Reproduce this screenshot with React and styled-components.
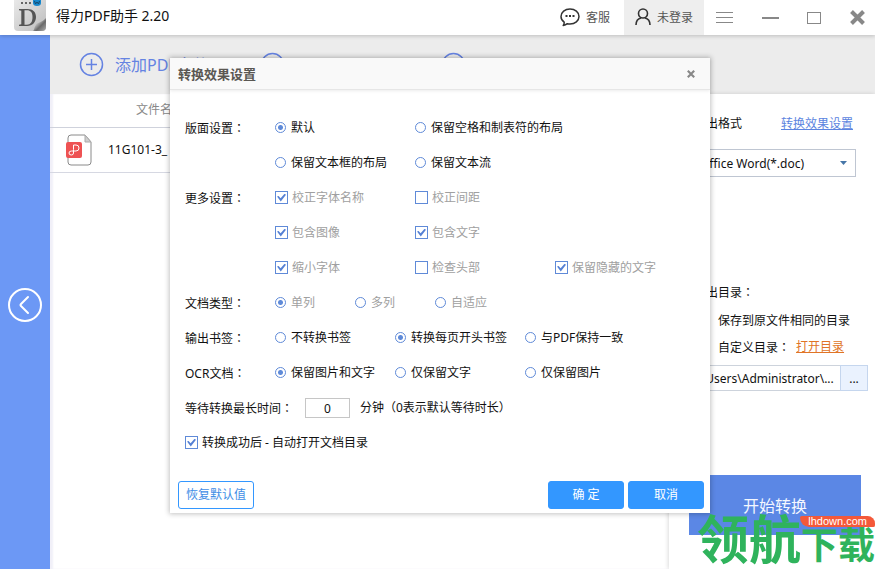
import React from "react";
import styled, { createGlobalStyle, css } from "styled-components";

const GlobalStyle = createGlobalStyle`
  * { box-sizing: border-box; }
  body { margin: 0; }
  body, button, input, select {
    font-family: "Noto Sans", "Noto Sans CJK SC", sans-serif;
    font-size: 12px;
    color: #111;
  }
  button { border: 0; padding: 0; background: none; cursor: pointer; }
`;

const Page = styled.div`
  position: relative;
  display: flex;
  flex-direction: column;
  min-height: 100vh;
  overflow: hidden;
  background: #fff;
  line-height: 18px;
`;

/* Title bar */
const TitleBar = styled.header`
  position: relative;
  display: flex;
  align-items: stretch;
  height: 35px;
  padding: 0 10px 0 14px;
  background: #fff;
  box-shadow: 0 1px 4px rgba(0, 0, 0, 0.2);
`;
const AppTitle = styled.h1`
  flex: 1;
  margin: 0;
  padding: 6px 0 0 10px;
  font-size: 14px;
  font-weight: 400;
  line-height: 20px;
`;
const TitleButton = styled.button`
  display: flex;
  align-items: center;
  gap: 6px;
  padding: 0 ${(p) => p.$pad}px 2px;
  color: #555;
  background: ${(p) => (p.$filled ? "#eeeeee" : "transparent")};
`;
const WindowButtons = styled.div`
  display: flex;
  align-items: center;
  justify-content: space-between;
  width: 149px;
  margin-left: 12px;
`;
const IconButton = styled.button`
  display: flex;
`;

const Columns = styled.div`
  display: flex;
  flex: 1;
`;
const Rail = styled.nav`
  display: flex;
  flex: 0 0 50px;
  align-items: center;
  justify-content: center;
  padding-top: 5px;
  background: #6c98f5;
`;
const Workspace = styled.div`
  display: flex;
  flex: 1;
  flex-direction: column;
  min-width: 0;
`;
const Toolbar = styled.div`
  display: grid;
  grid-template-columns: 181px 181px 1fr;
  align-items: center;
  height: 59px;
  padding-left: 29px;
  background: #ececec;
`;
const ToolButton = styled.button`
  display: flex;
  align-items: center;
  gap: 11px;
  font-size: 16px;
  line-height: 24px;
  white-space: nowrap;
  color: #6583e2;
`;
const Content = styled.div`
  display: flex;
  flex: 1;
  box-shadow: inset 3px 0 2px #f1f0f8;
`;

/* File list */
const ListPane = styled.main`
  flex: 1;
  min-width: 0;
`;
const FileTable = styled.table`
  width: 100%;
  border-collapse: collapse;
`;
const HeadCell = styled.th`
  height: 33px;
  padding: 0 0 0 86px;
  border-bottom: 1px solid #cfd2dc;
  font-weight: 400;
  text-align: left;
  color: #888;
`;
const FileCell = styled.td`
  height: 45px;
  padding: 0 0 0 16px;
  border-bottom: 1px solid #d6d8e2;
`;
const FileName = styled.span`
  display: flex;
  align-items: center;
  gap: 16px;
`;

/* Output panel */
const Panel = styled.aside`
  display: flex;
  flex: 0 0 206px;
  flex-direction: column;
  min-width: 0;
  padding: 21px 7px 34px 20px;
  background: #fff;
  box-shadow: -1px 0 4px rgba(0, 0, 0, 0.14);
`;
const PanelHead = styled.div`
  display: flex;
  justify-content: space-between;
  padding: 0 15px 0 5px;
`;
const Link = styled.a`
  color: ${(p) => (p.$warm ? "#e07426" : "#5b84e0")};
  text-decoration: underline;
`;
const SelectBox = styled.span`
  display: flex;
  align-items: center;
  height: 28px;
  margin: 16px 12px 0 0;
  padding-right: 8px;
  border: 1px solid #bfc6d2;
`;
const Select = styled.select`
  flex: 1;
  min-width: 0;
  height: 26px;
  padding: 0 0 0 10px;
  border: 0;
  appearance: none;
  background: transparent;
`;
const OutputDir = styled.fieldset`
  min-width: 0;
  margin: 106px 0 0;
  padding: 0;
  border: 0;
`;
const Legend = styled.legend`
  padding: 0 0 0 5px;
`;
const DirRow = styled.div`
  display: flex;
  align-items: center;
  gap: 6px;
  height: 26px;
  padding-left: 7px;
`;
const DirRows = styled.div`
  padding-top: 6px;
`;
const PathRow = styled.div`
  display: flex;
  height: 26px;
  margin-top: 5px;
`;
const PathInput = styled.input`
  flex: 1;
  width: 0;
  min-width: 0;
  padding: 0;
  border: 1px solid #cdd3dc;
  border-right: 0;
`;
const BrowseButton = styled.button`
  width: 28px;
  border: 1px solid #c5d6ee;
  background: #eaf2fe;
`;
const StartButton = styled.button`
  height: 60px;
  margin: auto 7px 0 0;
  font-size: 16px;
  color: #f4f7ff;
  background: #5b87e5;
`;

/* Settings dialog */
const Overlay = styled.div`
  position: absolute;
  inset: 0;
  display: flex;
  align-items: center;
  justify-content: center;
  padding: 2px 0 0 5px;
`;
const Dialog = styled.section`
  width: 540px;
  background: #fff;
  box-shadow: 0 0 5px 1px rgba(0, 0, 0, 0.24);
`;
const DialogHead = styled.header`
  display: flex;
  align-items: center;
  justify-content: space-between;
  height: 32px;
  padding: 0 15px 0 8px;
  border-bottom: 1px solid #e6e6e6;
  background: #f9f9f9;
  box-shadow: 0 1px 3px rgba(0, 0, 0, 0.08);
`;
const DialogTitle = styled.h2`
  margin: 0;
  font-size: 13px;
  font-weight: 600;
  color: #5a5752;
`;
const Form = styled.form`
  padding: 20px 6px 4px 15px;
`;
const Group = styled.div`
  display: flex;
`;
const GroupLabel = styled.div`
  flex: 0 0 90px;
  height: 35px;
  line-height: 35px;
`;
const ColonMark = styled.span`
  font-family: "Noto Sans CJK TC", sans-serif;
`;
const Options = styled.div`
  display: grid;
  grid-template-columns: ${(p) => p.$cols};
  grid-auto-rows: 35px;
`;
const Option = styled.label`
  display: flex;
  align-items: center;
  grid-column-start: ${(p) => (p.$first ? 1 : "auto")};
  gap: ${(p) => (p.$wide ? 10 : 4)}px;
  white-space: nowrap;
  color: ${(p) => (p.$dim ? "#a0a0a0" : "#111")};
`;
const controlBase = css`
  flex: none;
  margin: 0;
  appearance: none;
  border: 1px solid #5f8ad8;
  background: #fff;
`;
const Radio = styled.input.attrs({ type: "radio" })`
  ${controlBase}
  width: 11px;
  height: 11px;
  margin-right: 1px;
  border-radius: 50%;
  &:checked {
    background: radial-gradient(circle, #5f8ad8 0 2px, #fff 3px);
  }
`;
const Tick = styled.input.attrs({ type: "checkbox" })`
  ${controlBase}
  width: 13px;
  height: 13px;
  display: grid;
  place-items: center;
  &:checked::before {
    content: "";
    width: 9px;
    height: 8px;
    background: #5580d4;
    clip-path: polygon(0 38%, 18% 30%, 40% 58%, 84% 4%, 100% 16%, 42% 100%);
  }
`;
const WaitRow = styled.div`
  display: flex;
  align-items: center;
  height: 36px;
`;
const WaitLabel = styled.label`
  flex: 0 0 120px;
`;
const MinuteInput = styled.input`
  width: 45px;
  height: 20px;
  margin-right: 10px;
  padding: 0;
  border: 1px solid #c6c6c6;
  text-align: center;
`;
const OpenRow = styled.div`
  display: flex;
  height: 33px;
`;
const Actions = styled.div`
  display: flex;
  gap: 4px;
  margin: 22px 0 0 -7px;
`;
const Action = styled.button`
  width: 76px;
  height: 28px;
  padding-bottom: 2px;
  border: 1px solid #3397ff;
  border-radius: 3px;
  margin-right: ${(p) => (p.$ghost ? "auto" : "0")};
  color: ${(p) => (p.$ghost ? "#3f8ee6" : "#fff")};
  background: ${(p) => (p.$ghost ? "#fff" : "#3397ff")};
`;

/* Site mark in the lower right corner */
const SiteMark = styled.div`
  position: absolute;
  right: 0;
  bottom: 0;
  display: flex;
  align-items: flex-end;
  font-weight: 700;
  color: #2fb35c;
`;
const MarkBig = styled.span`
  font-size: 52px;
  line-height: 60px;
`;
const MarkSmall = styled.span`
  font-size: 37px;
  line-height: 48px;
`;
const MarkTag = styled.span`
  position: absolute;
  top: 7px;
  right: 0;
  padding: 0 8px;
  border-radius: 2px 8px 2px 10px;
  font: 400 11px/11px "Liberation Sans", sans-serif;
  color: #fff;
  background: #f4593a;
`;

const LogoIcon = () => (
  <svg width="32" height="35" viewBox="0 0 32 35" aria-hidden="true">
    <defs>
      <linearGradient id="logo-bg" x1="0" y1="0" x2="1" y2="1">
        <stop offset="0" stopColor="#e9e9e9" />
        <stop offset="1" stopColor="#bdbdbd" />
      </linearGradient>
      <linearGradient id="logo-curl" x1="0" y1="0" x2="1" y2="1">
        <stop offset="0.2" stopColor="#f4f4f4" />
        <stop offset="0.6" stopColor="#6a6a6a" />
        <stop offset="1" stopColor="#b0b0b0" />
      </linearGradient>
    </defs>
    <path d="M0 0H32V27Q32 31 28 31H4Q0 31 0 27Z" fill="url(#logo-bg)" />
    <path d="M5 9h8.500c5.500 0 8.500 3 8.500 8s-3.500 9-9 9H5v-1.200l2.300-.5V10.700L5 10.200Zm5.500 1.300v14.400h2.500c3.500 0 5.500-2.700 5.500-7.700 0-4.500-2-6.700-5.500-6.700Z" fill="#555" fillRule="evenodd" />
    <path d="M19 31c2-2 1-6 5-8 3-1 5-2 8-5v9q0 4-4 4Z" fill="url(#logo-curl)" />
    <path d="M7 2h2v2H7zM11 2h2v2h-2zM15 2h2v2h-2z" fill="#666" />
    <path d="M19 0h8v3q0 3-4 3t-4-3Z" fill="#1687cc" />
    <path d="m20.500 1 1 3 1.500-2 1.500 2 1-3" fill="none" stroke="#16496b" />
  </svg>
);
const ChatIcon = () => (
  <svg width="20" height="20" viewBox="0 0 20 20" fill="none" stroke="#333" strokeWidth="1.500" aria-hidden="true">
    <path d="M4.200 15.200C2 13.800 1 11.500 1 9.500 1 5.200 5 2 10 2s9 3.200 9 7.500-4 7.500-9 7.500c-1 0-1.800-.1-2.600-.3-1.200 1-2.400 1.600-4.200 1.800.8-.9 1.100-2 1-3.300Z" strokeLinejoin="round" />
    <path d="M5.500 9h2M9 9h2M12.500 9h2" strokeWidth="2" />
  </svg>
);
const UserIcon = () => (
  <svg width="16" height="18" viewBox="0 0 16 18" fill="none" stroke="#333" strokeWidth="1.600" aria-hidden="true">
    <circle cx="8" cy="5.500" r="4.500" />
    <path d="M1 17c0-3.500 2-6.300 5-7M15 17c0-3.500-2-6.300-5-7" />
  </svg>
);
const MenuIcon = () => (
  <svg width="17" height="12" viewBox="0 0 17 12" stroke="#888" aria-hidden="true">
    <path d="M0 .5h17M0 5.500h17M0 10.500h17" />
  </svg>
);
const MinimizeIcon = () => (
  <svg width="17" height="12" viewBox="0 0 17 12" stroke="#888" strokeWidth="2" aria-hidden="true">
    <path d="M0 6h17" />
  </svg>
);
const MaximizeIcon = () => (
  <svg width="14" height="12" viewBox="0 0 14 12" fill="none" stroke="#888" aria-hidden="true">
    <rect x=".5" y=".5" width="13" height="11" />
  </svg>
);
const CrossIcon = ({ size, width }) => (
  <svg width={size} height={size} viewBox="0 0 15 15" stroke="#888" strokeWidth={width} aria-hidden="true">
    <path d="M1.500 1.500l12 12M13.500 1.500l-12 12" />
  </svg>
);
const CircleIcon = ({ plus }) => (
  <svg width="25" height="25" viewBox="0 0 25 25" fill="none" stroke="#6583e2" strokeWidth="1.500" aria-hidden="true">
    <circle cx="12.500" cy="12.500" r="11" />
    {plus && <path d="M12.500 7v11M7 12.500h11" />}
  </svg>
);
const BackIcon = () => (
  <svg width="34" height="34" viewBox="0 0 34 34" fill="none" stroke="#fff" strokeWidth="2" aria-hidden="true">
    <circle cx="17" cy="17" r="16" />
    <path d="M20 9l-7 7q-1 1 0 2L20 25" strokeLinecap="round" />
  </svg>
);
const PdfIcon = () => (
  <svg width="26" height="32" viewBox="0 0 26 32" fill="none" aria-hidden="true">
    <path d="M5 1h14l6 7v20q0 3-3 3H5q-3 0-3-3V4q0-3 3-3Z" fill="#fff" stroke="#8a8a8a" />
    <path d="M19 1v7h6Z" fill="#cfcfcf" stroke="#aaa" />
    <rect y="8" width="16" height="16" rx="2" fill="#ee5253" />
    <path d="M7.500 15.500V11h2.500q3 0 3 3t-3 3H5.500Q3 17 3 19t2.300 2q2.200 0 2.200-2v-3.500" stroke="#fff" />
  </svg>
);
const ArrowIcon = () => (
  <svg width="7" height="4" viewBox="0 0 7 4" fill="#4676a8" aria-hidden="true">
    <path d="M0 0h7L3.500 4Z" />
  </svg>
);

const groups = [
  { id: "layout", label: "版面设置", cols: "140px 140px", radio: true, items: [["默认", 1], ["保留空格和制表符的布局"], ["保留文本框的布局"], ["保留文本流"]] },
  { id: "more", label: "更多设置", cols: "140px 140px 110px", dim: true, items: [["校正字体名称", 1], ["校正间距"], ["包含图像", 1, true], ["包含文字", 1], ["缩小字体", 1, true], ["检查头部"], ["保留隐藏的文字", 1]] },
  { id: "type", label: "文档类型", cols: "80px 80px 80px", dim: true, radio: true, items: [["单列", 1], ["多列"], ["自适应"]] },
  { id: "bookmark", label: "输出书签", cols: "120px 130px 110px", radio: true, items: [["不转换书签"], ["转换每页开头书签", 1], ["与PDF保持一致"]] },
  { id: "ocr", label: "OCR文档", cols: "120px 130px 110px", radio: true, items: [["保留图片和文字", 1], ["仅保留文字"], ["仅保留图片"]] },
];

const Colon = () => <ColonMark lang="zh-TW">：</ColonMark>;

const OptionGroup = ({ group }) => (
  <Group role="group" aria-labelledby={group.id}>
    <GroupLabel id={group.id}>{group.label}<Colon /></GroupLabel>
    <Options $cols={group.cols}>
      {group.items.map(([text, on, first]) => (
        <Option key={text} $dim={group.dim} $first={first}>
          {group.radio ? (
            <Radio name={group.id} defaultChecked={!!on} disabled={group.dim} />
          ) : (
            <Tick defaultChecked={!!on} disabled={group.dim} />
          )}
          {text}
        </Option>
      ))}
    </Options>
  </Group>
);

const SettingsDialog = () => (
  <Overlay>
    <Dialog role="dialog" aria-labelledby="dialog-title">
      <DialogHead>
        <DialogTitle id="dialog-title">转换效果设置</DialogTitle>
        <IconButton type="button" aria-label="关闭">
          <CrossIcon size={8} width={4} />
        </IconButton>
      </DialogHead>
      <Form>
        {groups.map((g) => (
          <OptionGroup key={g.id} group={g} />
        ))}
        <WaitRow>
          <WaitLabel htmlFor="minutes">等待转换最长时间<Colon /></WaitLabel>
          <MinuteInput id="minutes" defaultValue="0" />
          <span>分钟（0表示默认等待时长）</span>
        </WaitRow>
        <OpenRow>
          <Option>
            <Tick defaultChecked />
            转换成功后 - 自动打开文档目录
          </Option>
        </OpenRow>
        <Actions>
          <Action type="button" $ghost>恢复默认值</Action>
          <Action type="button">确 定</Action>
          <Action type="button">取消</Action>
        </Actions>
      </Form>
    </Dialog>
  </Overlay>
);

const OutputPanel = () => (
  <Panel>
    <PanelHead>
      <label htmlFor="format">输出格式</label>
      <Link href="#settings">转换效果设置</Link>
    </PanelHead>
    <SelectBox>
      <Select id="format">
        <option>Office Word(*.doc)</option>
      </Select>
      <ArrowIcon />
    </SelectBox>
    <OutputDir>
      <Legend>输出目录<Colon /></Legend>
      <DirRows>
        <DirRow>
          <Option $wide>
            <Radio name="dir" />
            保存到原文件相同的目录
          </Option>
        </DirRow>
        <DirRow>
          <Option $wide>
            <Radio name="dir" defaultChecked />
            <span>自定义目录<Colon /></span>
          </Option>
          <Link href="#open" $warm>打开目录</Link>
        </DirRow>
      </DirRows>
      <PathRow>
        <PathInput aria-label="自定义目录" defaultValue="C:\Users\Administrator\..." />
        <BrowseButton type="button">...</BrowseButton>
      </PathRow>
    </OutputDir>
    <StartButton type="button">开始转换</StartButton>
  </Panel>
);

const FileList = () => (
  <ListPane>
    <FileTable>
      <thead>
        <tr><HeadCell>文件名</HeadCell></tr>
      </thead>
      <tbody>
        <tr>
          <FileCell><FileName><PdfIcon />11G101-3_</FileName></FileCell>
        </tr>
      </tbody>
    </FileTable>
  </ListPane>
);

export default function App() {
  return (
    <Page>
      <GlobalStyle />
      <TitleBar>
        <LogoIcon />
        <AppTitle>得力PDF助手 2.20</AppTitle>
        <TitleButton type="button" $pad={14}>
          <ChatIcon />
          客服
        </TitleButton>
        <TitleButton type="button" $pad={11} $filled>
          <UserIcon />
          未登录
        </TitleButton>
        <WindowButtons>
          <IconButton type="button" aria-label="菜单"><MenuIcon /></IconButton>
          <IconButton type="button" aria-label="最小化"><MinimizeIcon /></IconButton>
          <IconButton type="button" aria-label="最大化"><MaximizeIcon /></IconButton>
          <IconButton type="button" aria-label="关闭"><CrossIcon size={15} width={4} /></IconButton>
        </WindowButtons>
      </TitleBar>
      <Columns>
        <Rail>
          <IconButton type="button" aria-label="返回"><BackIcon /></IconButton>
        </Rail>
        <Workspace>
          <Toolbar>
            <ToolButton type="button"><CircleIcon plus />添加PDF文件</ToolButton>
            <ToolButton type="button" aria-label="添加文件夹"><CircleIcon /></ToolButton>
            <ToolButton type="button" aria-label="清空列表"><CircleIcon /></ToolButton>
          </Toolbar>
          <Content>
            <FileList />
            <OutputPanel />
          </Content>
        </Workspace>
      </Columns>
      <SettingsDialog />
      <SiteMark>
        <MarkBig>领航</MarkBig>
        <MarkSmall>下载</MarkSmall>
        <MarkTag>lhdown.com</MarkTag>
      </SiteMark>
    </Page>
  );
}
